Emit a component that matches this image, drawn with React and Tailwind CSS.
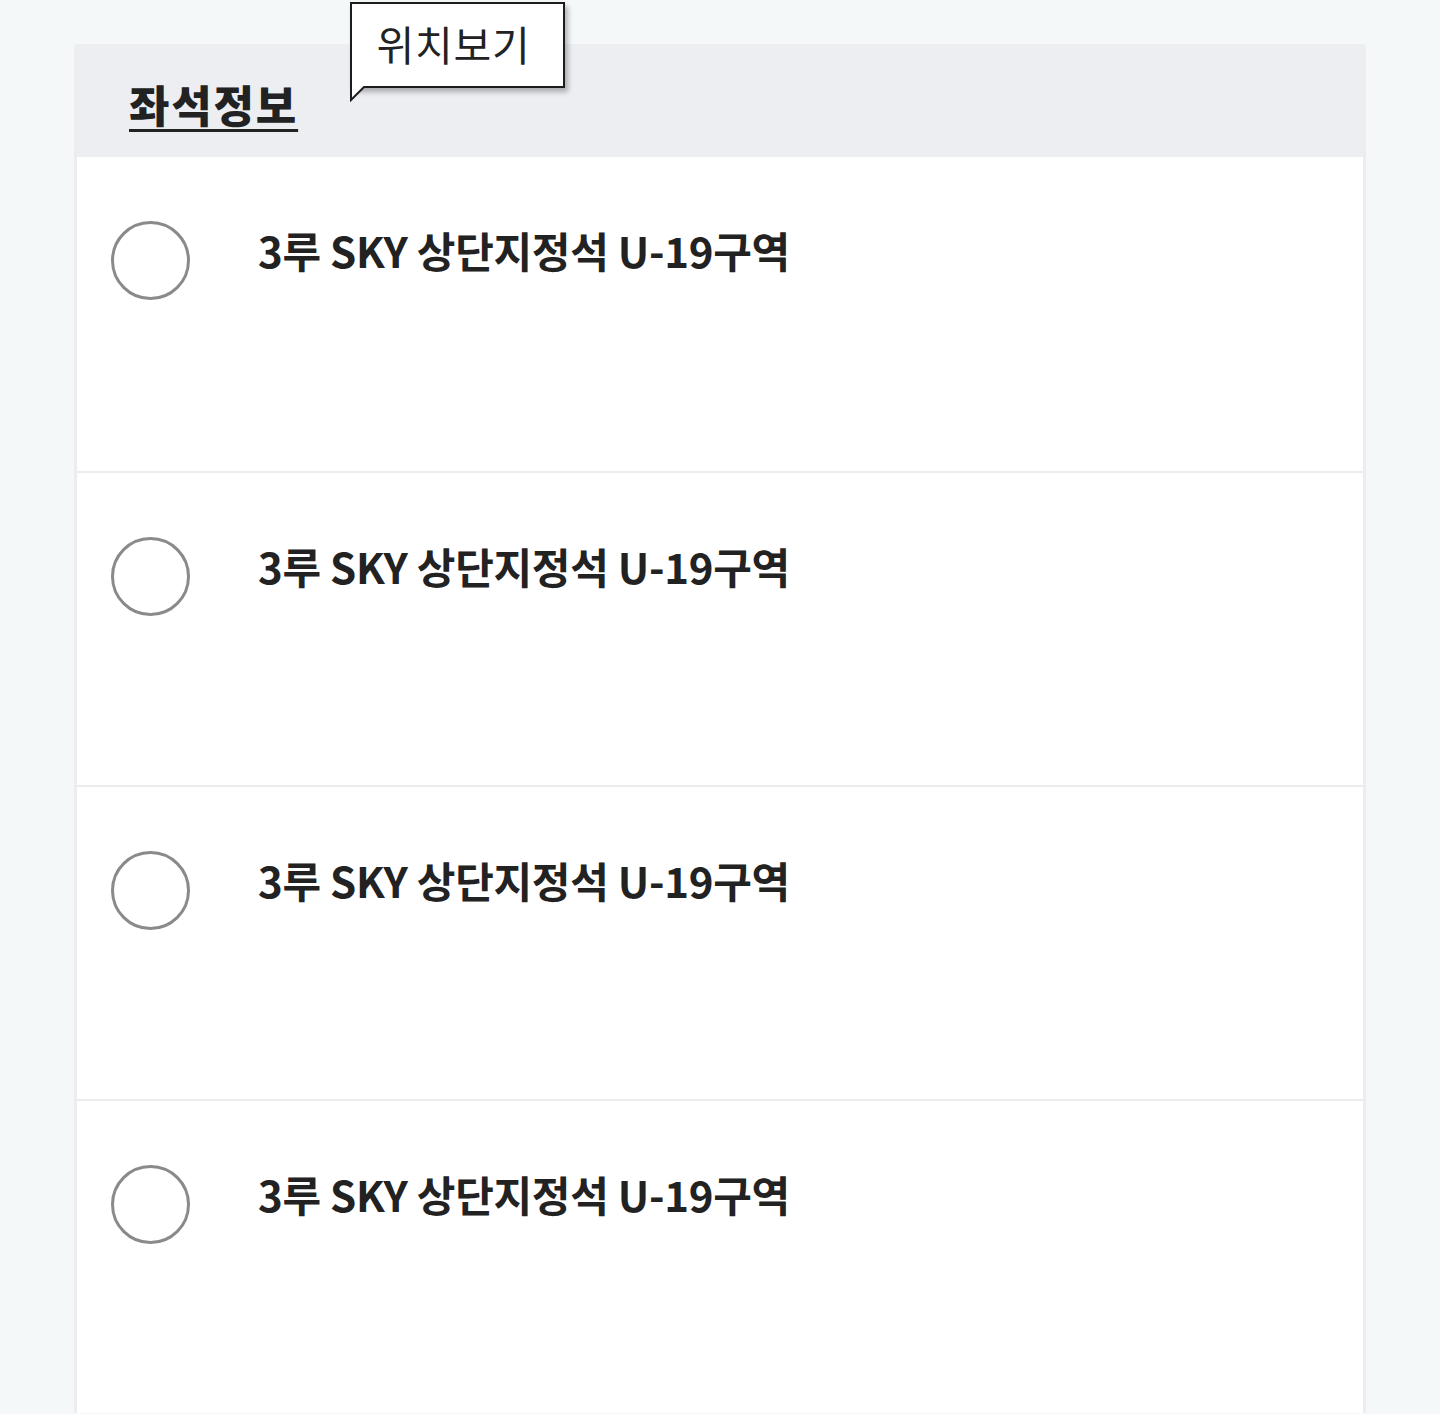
import React from "react";

const font = { fontFamily: '"Noto Sans CJK KR", "Noto Sans", sans-serif' };

function Row({ first }) {
  return (
    <div className={`flex items-start h-[314px] bg-white ${first ? "" : "border-t-2 border-[#ececee]"}`}>
      <div className="ml-[34px] mt-[64px] w-[79px] h-[79px] rounded-full border-[3px] border-[#8a8a8a] shrink-0" />
      <div className="ml-[68px] mt-[65px] text-[42px] leading-[56px] font-bold text-[#222] tracking-[-0.28px]">
        3루 SKY 상단지정석 U-19구역
      </div>
    </div>
  );
}

export default function App() {
  return (
    <div className="min-h-[1414px] bg-[#f5f8f9] pt-[44px]" style={font}>
      <div className="relative ml-[74px] w-[1292px] rounded-t-[4px] border-x-[3px] border-[#ebedf0] bg-[#eceef2]">
        <div className="h-[113px] flex items-center pl-[52px] pt-[6px]">
          <span className="text-[44px] font-black text-[#222] underline decoration-[3px] underline-offset-[6px] tracking-[1.8px] leading-none">
            좌석정보
          </span>
        </div>
        <div className="absolute left-[273px] top-[-42px] w-[215px] h-[86px] bg-white border-2 border-[#1c1c1c] shadow-[3px_4px_5px_rgba(0,0,0,0.28)] flex items-center justify-center">
          <span className="text-[41px] font-normal text-[#222] tracking-[0.8px] leading-none -mt-[4px] -ml-[8px]">위치보기</span>
          <svg className="absolute left-[-2px] top-[82px]" width="18" height="16" viewBox="0 0 18 16">
            <polygon points="2,0 15,0 2,13" fill="#fff" />
            <path d="M1 0 L1 14 L14 1 L16 1" stroke="#1c1c1c" strokeWidth="2" fill="none" strokeLinejoin="miter" />
          </svg>
        </div>
        <div className="bg-white">
          <Row first />
          <Row />
          <Row />
          <Row />
        </div>
      </div>
    </div>
  );
}
